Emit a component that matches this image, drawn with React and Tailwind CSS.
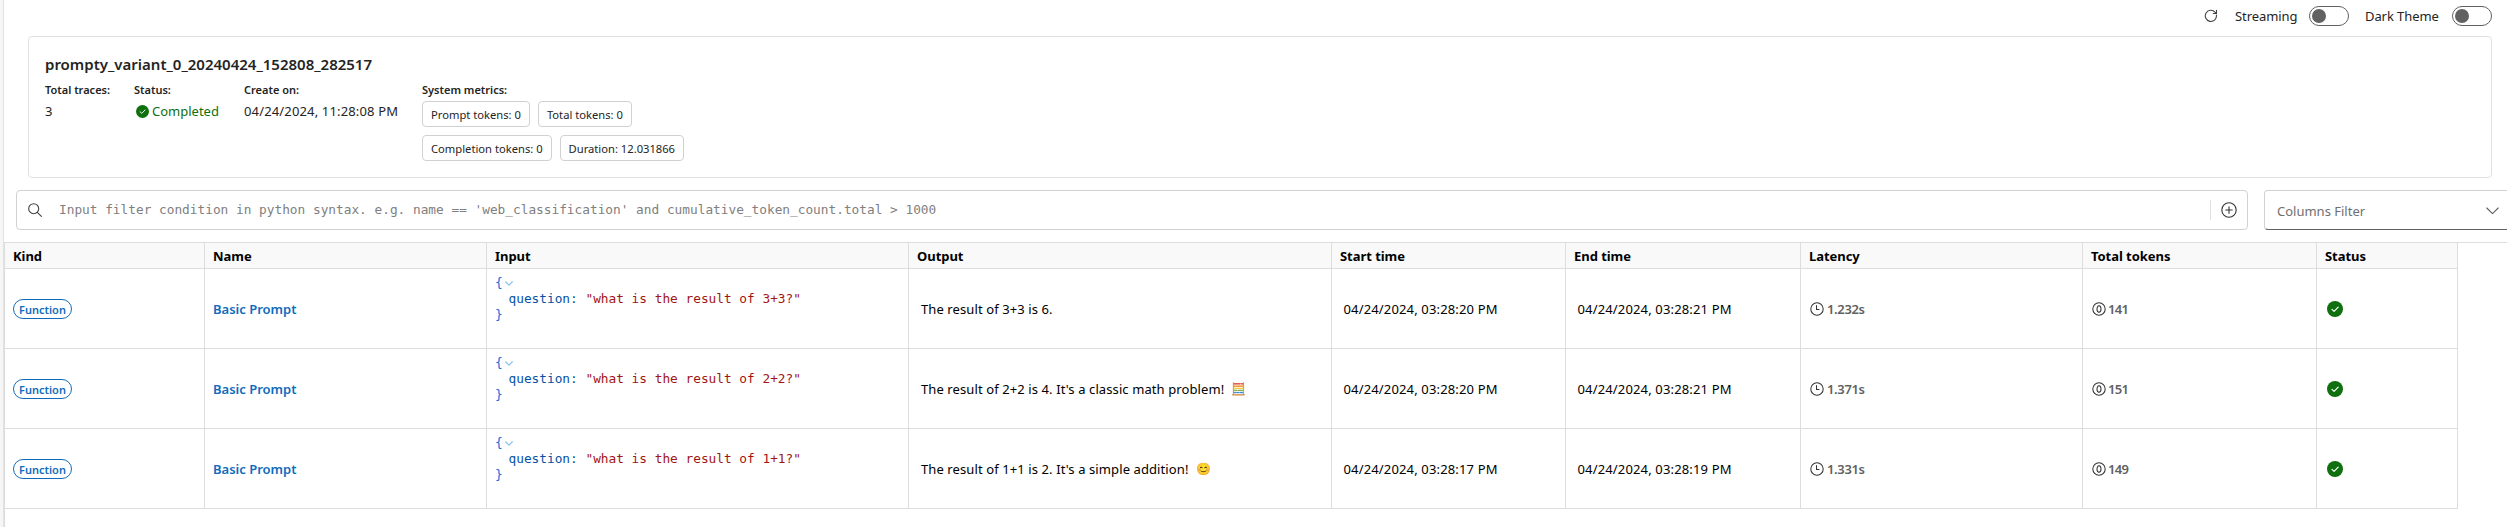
const COLS = "grid grid-cols-[200px_282px_422px_423px_234px_235px_282px_234px_141px] w-[2453px]";
const HEADERS = ["Kind", "Name", "Input", "Output", "Start time", "End time", "Latency", "Total tokens", "Status"];
const ROWS = [
  { q: "3+3", output: "The result of 3+3 is 6.", start: "04/24/2024, 03:28:20 PM", end: "04/24/2024, 03:28:21 PM", latency: "1.232s", tokens: "141" },
  { q: "2+2", output: "The result of 2+2 is 4. It's a classic math problem!", emoji: "🧮", start: "04/24/2024, 03:28:20 PM", end: "04/24/2024, 03:28:21 PM", latency: "1.371s", tokens: "151" },
  { q: "1+1", output: "The result of 1+1 is 2. It's a simple addition!", emoji: "😊", start: "04/24/2024, 03:28:17 PM", end: "04/24/2024, 03:28:19 PM", latency: "1.331s", tokens: "149" },
];

function CheckCircle({ className }) {
  return (
    <svg viewBox="0 0 16 16" className={className} fill="none">
      <circle cx="8" cy="8" r="8" fill="#0e700e" />
      <path d="M5 8.3 7.1 10.3 11.2 6.1" stroke="#fff" strokeWidth="1.15" strokeLinecap="round" strokeLinejoin="round" />
    </svg>
  );
}

function RefreshIcon() {
  return (
    <svg viewBox="0 0 14 14" className="h-3.5 w-3.5" fill="none" stroke="#424242" strokeWidth="1.1" strokeLinecap="round" strokeLinejoin="round">
      <path d="M12.4 6A5.6 5.6 0 1 1 11 3.1L12.3 4.4" />
      <path d="M12.5 1.3V4.5H9.3" />
    </svg>
  );
}

function ClockIcon() {
  return (
    <svg viewBox="0 0 14 14" className="h-3.5 w-3.5 shrink-0" fill="none" stroke="#333" strokeWidth="1.05" strokeLinecap="round" strokeLinejoin="round">
      <circle cx="7" cy="7" r="6.2" />
      <path d="M6.5 3.6V7.5H9" />
    </svg>
  );
}

function TokenIcon() {
  return (
    <svg viewBox="0 0 14 14" className="h-3.5 w-3.5 shrink-0" fill="none" stroke="#333" strokeWidth="1.05">
      <circle cx="7" cy="7" r="6.2" />
      <ellipse cx="7" cy="7" rx="2" ry="3.3" />
    </svg>
  );
}

function Toggle() {
  return (
    <span className="flex h-5 w-10 items-center rounded-full border border-[#616161] pl-0.5">
      <span className="h-3.5 w-3.5 rounded-full bg-[#616161]" />
    </span>
  );
}

function Chip({ children }) {
  return (
    <span className="flex h-[26px] items-center rounded border border-[#d1d1d1] px-2 text-[11.2px] leading-4 whitespace-nowrap">
      <span className="pt-0.5">{children}</span>
    </span>
  );
}

function Field({ label, className, children }) {
  return (
    <div className={className}>
      <div className="mb-[3px] text-[11px] leading-4 font-semibold whitespace-nowrap">{label}</div>
      {children}
    </div>
  );
}

function Cell({ className = "", children }) {
  return <div className={`flex items-center border-r border-b border-[#dddddd] whitespace-nowrap ${className}`}>{children}</div>;
}

function JsonView({ q }) {
  return (
    <div className="h-full pt-[5px] font-['DejaVu_Sans_Mono','Liberation_Mono',monospace] text-[12.79px] leading-4 whitespace-pre">
      <div className="flex items-center text-[#0f6cdc]">
        <span>{"{"}</span>
        <svg viewBox="0 0 8 5" className="ml-[2.3px] h-[5px] w-2" fill="none" stroke="#8dbdee" strokeWidth="1.2" strokeLinecap="round" strokeLinejoin="round">
          <path d="M.6.8 4 4.1 7.4.8" />
        </svg>
      </div>
      <div className="pl-[13.5px]">
        <span className="text-[#0451a5]">question: </span>
        <span className="text-[#a31515]">{`"what is the result of ${q}?"`}</span>
      </div>
      <div className="text-[#0f6cdc]">{"}"}</div>
    </div>
  );
}

export default function App() {
  return (
    <div className="flex h-[527px] w-full overflow-hidden bg-white font-['Noto_Sans','Open_Sans',sans-serif] text-[13px] leading-5 text-[#242424]">
      <div className="w-1 shrink-0 border-r border-[#e2e2e2] bg-[#f6f6f6]" />
      <main className="flex min-w-0 flex-1 flex-col">
        <header className="flex h-9 shrink-0 items-start justify-end pt-1.5 pr-[15px]">
          <span className="flex h-5 w-[31px] items-center"><RefreshIcon /></span>
          <span className="w-[74px] tracking-[-0.08px]">Streaming</span>
          <Toggle />
          <span className="ml-4 w-[87px] tracking-[-0.08px]">Dark Theme</span>
          <Toggle />
        </header>

        <section className="mr-[15px] ml-6 h-[142px] shrink-0 rounded border border-[#e0e0e0] p-4">
          <h1 className="mb-[7px] text-[15px] leading-[22px] font-semibold">prompty_variant_0_20240424_152808_282517</h1>
          <div className="flex">
            <Field label="Total traces:" className="w-[89px]">3</Field>
            <Field label="Status:" className="w-[110px]">
              <div className="flex items-center text-[#0e700e]">
                <CheckCircle className="mr-[3.5px] ml-[1.5px] h-[13px] w-[13px]" />
                Completed
              </div>
            </Field>
            <Field label="Create on:" className="w-[178px]">
              <span className="tracking-[0.15px]">04/24/2024, 11:28:08 PM</span>
            </Field>
            <Field label="System metrics:">
              <div className="flex flex-col gap-2">
                <div className="flex gap-2">
                  <Chip>Prompt tokens: 0</Chip>
                  <Chip>Total tokens: 0</Chip>
                </div>
                <div className="flex gap-2">
                  <Chip>Completion tokens: 0</Chip>
                  <Chip>Duration: 12.031866</Chip>
                </div>
              </div>
            </Field>
          </div>
        </section>

        <div className="mt-3 ml-3 flex h-10 shrink-0 gap-4">
          <div className="flex w-[2232px] shrink-0 items-center rounded border border-[#d1d1d1] pr-2.5 pl-[11px]">
            <svg viewBox="0 0 14 14" className="h-3.5 w-3.5" fill="none" stroke="#424242" strokeWidth="1.1" strokeLinecap="round">
              <circle cx="5.7" cy="5.7" r="5" />
              <path d="M9.3 9.3 13.4 13.4" />
            </svg>
            <span className="ml-[17px] flex-1 font-['DejaVu_Sans_Mono','Liberation_Mono',monospace] text-[12.79px] whitespace-pre text-[#808080]">
              Input filter condition in python syntax. e.g. name == 'web_classification' and cumulative_token_count.total &gt; 1000
            </span>
            <span className="mr-2.5 h-5 w-px bg-[#e0e0e0]" />
            <svg viewBox="0 0 16 16" className="h-4 w-4" fill="none" stroke="#333" strokeWidth="1.1" strokeLinecap="round">
              <circle cx="8" cy="8" r="7.2" />
              <path d="M8 4.8V11.2M4.8 8H11.2" />
            </svg>
          </div>
          <div className="flex w-[248px] shrink-0 items-center rounded border border-[#d1d1d1] border-b-[#616161] pl-3">
            <span className="w-[209px] pt-0.5 text-[#707070]">Columns Filter</span>
            <svg viewBox="0 0 13 8" className="mt-0.5 h-2 w-[13px]" fill="none" stroke="#616161" strokeWidth="1.1" strokeLinecap="round" strokeLinejoin="round">
              <path d="M.8 1 6.5 6.7 12.2 1" />
            </svg>
          </div>
        </div>

        <div className="mt-3 flex-1 border-t border-l border-[#dddddd] text-black">
          <div className={`${COLS} h-[26px] bg-[#f9f9f9] font-bold`}>
            {HEADERS.map((h) => (
              <Cell key={h} className="pt-px pl-2 tracking-[-0.05px]">{h}</Cell>
            ))}
          </div>
          {ROWS.map((r) => (
            <div key={r.q} className={`${COLS} h-20`}>
              <Cell className="pt-px pl-2">
                <span className="flex h-5 w-[59px] items-center justify-center rounded-full border border-[#0f6cbd] pt-0.5 text-[11px] leading-4 font-semibold text-[#0f6cbd]">Function</span>
              </Cell>
              <Cell className="pt-px pl-2 font-semibold text-[#0f6cbd]">Basic Prompt</Cell>
              <Cell className="pt-px pl-2"><JsonView q={r.q} /></Cell>
              <Cell className="pt-px pl-3 tracking-[0.1px]">
                {r.output}
                {r.emoji && <span className="ml-[7px] text-[12px]">{r.emoji}</span>}
              </Cell>
              <Cell className="pt-px pl-[11.5px] tracking-[0.15px]">{r.start}</Cell>
              <Cell className="pt-px pl-[11.5px] tracking-[0.15px]">{r.end}</Cell>
              <Cell className="gap-[3px] pt-px pl-[9px] font-semibold tracking-[-0.35px] text-[#616161]"><ClockIcon />{r.latency}</Cell>
              <Cell className="gap-0.5 pt-px pl-[9px] font-semibold tracking-[-0.7px] text-[#616161]"><TokenIcon />{r.tokens}</Cell>
              <Cell className="pt-px pl-2.5"><CheckCircle className="h-4 w-4" /></Cell>
            </div>
          ))}
        </div>
      </main>
    </div>
  );
}
